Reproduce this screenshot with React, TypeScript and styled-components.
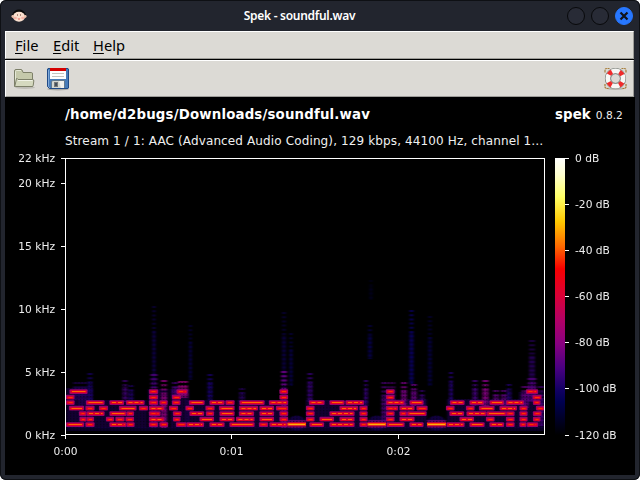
import React from "react";
import styled, { createGlobalStyle } from "styled-components";

const Global = createGlobalStyle`
  * { box-sizing: border-box; }
  body { margin: 0; background: #fff; overflow: hidden; }
`;

const Frame = styled.div`
  width: 640px;
  height: 480px;
  display: flex;
  flex-direction: column;
  padding: 1px 5px 5px 5px;
  background: #22252e;
  border-radius: 6px;
  box-shadow: inset 0 0 0 1px #0e1014;
  font-family: "DejaVu Sans", sans-serif;
`;

const TitleBar = styled.header`
  height: 30px;
  flex: none;
  display: grid;
  grid-template-columns: 80px 1fr 80px;
  align-items: center;
  color: #fff;
`;

const AppIcon = styled.svg`
  display: block;
  margin-left: 5px;
`;

const Title = styled.h1`
  margin: 0;
  text-align: center;
  padding-right: 41px;
  font: 600 12px/16px "Noto Sans", sans-serif;
  letter-spacing: -0.28px;
  white-space: nowrap;
`;

const Controls = styled.div`
  display: flex;
  justify-content: flex-end;
  gap: 6px;
  padding-right: 2px;
`;

const Control = styled.button<{ $close?: boolean }>`
  width: 18px;
  height: 18px;
  padding: 0;
  border-radius: 50%;
  border: 1px solid ${(p) => (p.$close ? "#2777ff" : "#08090b")};
  background: ${(p) => (p.$close ? "#2777ff" : "#282b36")};
  display: grid;
  place-items: center;
`;

const Bar = styled.nav<{ $height: number }>`
  height: ${(p) => p.$height}px;
  flex: none;
  display: flex;
  align-items: center;
  background: #dcdad5;
  border-top: 1px solid #fff;
  border-left: 1px solid #fff;
  border-right: 1px solid #9d9c98;
  border-bottom: 1px solid #9d9c98;
  margin-right: 1px;
`;

const MenuBar = styled(Bar)`
  padding: 0 0 1px 9px;
  gap: 14px;
  margin-bottom: 1px;
  box-shadow: 0 1px 0 #000;
  font: 14.667px/20px "Noto Sans", sans-serif;
  color: #000;
`;

const MenuItem = styled.span<{ $width: number }>`
  width: ${(p) => p.$width}px;
  white-space: nowrap;
`;

const Key = styled.span`
  text-decoration: underline;
  text-decoration-thickness: 1px;
  text-underline-offset: 2px;
`;

const ToolBar = styled(Bar)`
  padding: 0 6px 0 6px;
  gap: 10px;
`;

const Spacer = styled.div`
  flex: 1;
`;

const Content = styled.main`
  flex: 1;
  min-height: 0;
  background: #000;
  color: #fff;
  display: flex;
  flex-direction: column;
`;

const Heading = styled.div`
  display: flex;
  align-items: baseline;
  height: 34px;
  padding: 10px 10px 0 60px;
  white-space: nowrap;
`;

const FileName = styled.strong`
  width: 490px;
  font-size: 13.333px;
  line-height: 16px;
  letter-spacing: 0.17px;
`;

const Brand = styled.strong`
  font-size: 13.333px;
  line-height: 16px;
  letter-spacing: 0.1px;
`;

const Version = styled.span`
  margin-left: 5px;
  font-size: 10.667px;
  color: #eee;
`;

const StreamInfo = styled.div`
  height: 17px;
  padding-left: 60px;
  font-size: 12px;
  line-height: 20px;
  letter-spacing: 0.125px;
  color: #f0f0f0;
  white-space: nowrap;
`;

const Chart = styled.svg`
  display: block;
  flex: none;
  font-size: 10.667px;
`;

type Segment = [number, number];

const ROW_Y = [391, 396.6, 402, 407.6, 413, 418.6, 424];

const NOTES: Segment[][] = [
  [[70, 87], [149.5, 157.5], [177, 187], [280, 287.5], [386.5, 394], [526.5, 537.5]],
  [[66.5, 74], [149.5, 157.5], [172.5, 180.5], [280, 287.5], [386.5, 394], [533, 541]],
  [[66.5, 74], [86.5, 104], [110, 123.5], [126.5, 144], [149.5, 157.5], [160, 167], [172.5, 180], [189.5, 204], [210, 224], [226, 234], [240, 264], [269.5, 287.5], [309.5, 324], [330, 344], [346, 363.5], [386.5, 404], [410, 423], [450.5, 464], [470, 483.5], [490, 503.5], [506.5, 523.5], [533.5, 540]],
  [[69.5, 83.5], [86, 94], [99.5, 107.5], [119.5, 136], [139.5, 147.5], [149.5, 164], [169.5, 177.5], [186, 193.5], [206, 214], [219.5, 234], [239.5, 257.5], [260, 273.5], [276.5, 287.5], [306.5, 314], [340, 357.5], [360, 367], [386.5, 397.5], [400, 414], [417, 427], [446.5, 454], [466.5, 474], [479.5, 494], [500, 516.5], [520, 527], [536.5, 544]],
  [[79.5, 86], [87, 104], [110, 126], [127, 133.5], [149.5, 160], [173.5, 181], [190, 203.5], [206.5, 213.5], [220, 234], [239.5, 253.5], [260, 273.5], [280, 287.5], [306.5, 314], [330, 354], [360, 367], [386.5, 394], [400, 406.5], [407.5, 426], [450, 463.5], [467, 486], [487, 506], [506.5, 514], [520, 527], [533.5, 541]],
  [[80, 86], [87, 93.5], [106.5, 113.5], [116, 124], [126, 133.5], [149.5, 164], [173.5, 180], [200, 213.5], [220, 234], [236.5, 254], [260, 273.5], [280, 287.5], [306.5, 314], [320, 333.5], [340, 354], [360, 367], [386.5, 394], [400, 414], [460, 473.5], [486.5, 494], [506.5, 514], [520, 527], [533.5, 540]],
  [[66.5, 83.5], [86, 94], [110, 126], [127, 134], [149.5, 157.5], [160, 167.5], [176.5, 186], [187, 203.5], [210, 224], [230, 254], [259.5, 267.5], [270, 287], [310, 323.5], [330, 354], [360, 367], [387, 404], [410, 423], [447, 464], [470, 484], [490, 503.5], [506.5, 514], [520, 526], [527.5, 537.5]],
];

const SUSTAINED: Segment[] = [[287.5, 306], [367.5, 386], [427, 446]];

/* x, top, bottom, width, colour, peak opacity */
const SPIKES: [number, number, number, number, string, number][] = [
  [154, 306, 388, 3, "#14006c", 0.5],
  [154, 374, 428, 7, "#50007e", 0.8],
  [164, 380, 428, 6, "#8a0078", 0.8],
  [190.5, 325, 380, 3, "#0c0064", 0.45],
  [284, 312, 390, 4, "#100064", 0.4],
  [284, 371, 428, 6, "#6c0084", 0.85],
  [291, 333, 386, 3, "#0a0060", 0.55],
  [370, 325, 359, 4, "#09006c", 0.45],
  [371, 280, 300, 3, "#060050", 0.25],
  [411.5, 310, 384, 4, "#0a0060", 0.8],
  [430, 316, 386, 4, "#08005c", 0.4],
  [532, 340, 392, 6, "#300070", 0.5],
  [183, 381, 398, 10, "#9a007c", 0.75],
  [175, 382, 398, 6, "#4b0080", 0.7],
  [90, 373, 402, 5, "#1c0078", 0.6],
  [80, 382, 400, 14, "#2a0070", 0.5],
  [125, 380, 402, 5, "#450080", 0.65],
  [131, 385, 402, 5, "#250078", 0.6],
  [210, 374, 400, 5, "#1a0074", 0.7],
  [242, 388, 402, 6, "#300078", 0.5],
  [310, 373, 402, 5, "#3a0080", 0.7],
  [366, 380, 406, 4, "#380080", 0.7],
  [384, 382, 428, 5, "#500080", 0.7],
  [391, 382, 404, 9, "#5b0080", 0.5],
  [404, 382, 408, 6, "#750080", 0.8],
  [414, 384, 406, 6, "#640080", 0.8],
  [422, 390, 406, 5, "#400080", 0.6],
  [451, 372, 404, 4, "#26007a", 0.7],
  [475, 380, 406, 5, "#460080", 0.75],
  [485.5, 380, 408, 6, "#820080", 0.85],
  [496, 390, 406, 6, "#600080", 0.7],
  [504, 390, 406, 6, "#600080", 0.7],
  [509, 384, 405, 5, "#260078", 0.7],
  [525, 386, 408, 7, "#640080", 0.7],
  [532, 378, 402, 9, "#580080", 0.7],
  [541, 386, 426, 6, "#480080", 0.6],
];

/* cluster extents behind the notes */
const CLOUDS: [number, number, number][] = [
  [66, 93, 388], [79, 107, 400], [107, 147, 400], [148, 168, 389], [170, 189, 389],
  [186, 235, 400], [237, 288, 400], [306, 367, 400], [385, 427, 399], [447, 527, 399], [519, 544, 392],
];

const FREQ_TICKS: [number, string][] = [[158.5, "22 kHz"], [183.5, "20 kHz"], [246.5, "15 kHz"], [309.5, "10 kHz"], [372.5, "5 kHz"], [435.5, "0 kHz"]];
const TIME_TICKS: [number, string][] = [[65.5, "0:00"], [231.5, "0:01"], [398.5, "0:02"]];
const LEVEL_TICKS: [number, string][] = [[158.5, "0 dB"], [204.5, "-20 dB"], [250.5, "-40 dB"], [296.5, "-60 dB"], [342.5, "-80 dB"], [388.5, "-100 dB"], [435.5, "-120 dB"]];

const PALETTE: [number, string][] = [[0, "#fff"], [6, "#ffffd0"], [14, "#ffff66"], [23, "#ffc800"], [32, "#ff6800"], [40, "#f80000"], [50, "#d80038"], [59, "#b00068"], [67, "#880080"], [76, "#480080"], [84, "#100062"], [88, "#000050"], [100, "#000"]];

const Spectrum = () => (
  <g>
    <g filter="url(#soften)">
      {CLOUDS.map(([a, b, y], i) => (
        <rect key={i} x={a} y={y} width={b - a} height={428 - y} fill="#20005a" opacity={0.55} />
      ))}
      <rect x={66} y={427} width={478} height={4} fill="#12004a" opacity={0.55} />
      {SUSTAINED.map(([a, b], i) => (
        <g key={i}>
          <ellipse cx={(a + b) / 2} cy={423} rx={(b - a) / 2} ry={7.5} fill="#180058" opacity={0.7} />
          <rect x={a} y={420} width={b - a} height={8} fill="#780070" opacity={0.75} />
        </g>
      ))}
    </g>
    <g filter="url(#soften)">
      {SPIKES.map(([x, top, bottom, w, c, o], i) => (
        <g key={i}>
          <rect x={x - w / 2} y={top + (bottom - top) * 0.3} width={w} height={(bottom - top) * 0.7} fill={c} opacity={o * 0.75} />
          <path d={`M${x} ${top}V${bottom}`} stroke={c} strokeWidth={w} strokeDasharray="2 2.2" opacity={o} />
        </g>
      ))}
    </g>
    <rect x={66} y={382} width={478} height={52} fill="url(#grain)" />
    <g filter="url(#glow)">
      {NOTES.map((row, r) => row.map(([a, b], i) => (
        <rect key={`${r}-${i}`} x={a - 0.6} y={ROW_Y[r] - 1.8} width={b - a + 1.2} height={4.8} rx={1} fill="#98006c" />
      )))}
    </g>
    {NOTES.map((row, r) => row.map(([a, b], i) => {
      const y = Math.round(ROW_Y[r]);
      return (
        <g key={`${r}-${i}`}>
          <rect x={a + 0.3} y={y - 0.8} width={b - a - 0.6} height={2.7} rx={0.8} fill="#e00024" />
          <path
            d={`M${a + 2} ${y + 0.5}H${b - 1.5}`}
            stroke={b - a > 11 ? "#ff6300" : "#fb3000"}
            strokeWidth={1}
            strokeDasharray={(i + r) % 3 === 0 ? undefined : "4 2"}
          />
        </g>
      );
    }))}
    {SUSTAINED.map(([a, b], i) => (
      <g key={i}>
        <rect x={a} y={422.2} width={b - a} height={4.2} fill="#c80040" />
        <rect x={a} y={423} width={b - a} height={2.5} fill="#ff4e00" />
        <rect x={a + 1} y={424} width={b - a - 2} height={1} fill="#ffb010" />
      </g>
    ))}
  </g>
);

const SpectrumChart = () => (
  <Chart width="630" height="327" viewBox="5 148 630 327">
    <defs>
      <linearGradient id="palette" x1="0" y1="0" x2="0" y2="1">
        {PALETTE.map(([o, c]) => <stop key={o} offset={`${o}%`} stopColor={c} />)}
      </linearGradient>
      <filter id="soften" x="-5%" y="-5%" width="110%" height="110%" colorInterpolationFilters="sRGB"><feGaussianBlur stdDeviation="1 0.7" /></filter>
      <filter id="glow" x="-5%" y="-20%" width="110%" height="140%" colorInterpolationFilters="sRGB"><feGaussianBlur stdDeviation="0.7 0.4" /></filter>
      <clipPath id="plot"><rect x="66" y="159" width="478" height="275" /></clipPath>
      <pattern id="grain" width="3.33" height="2.77" patternUnits="userSpaceOnUse">
        <rect width="1.2" height="1.2" fill="#000" opacity="0.5" />
      </pattern>
    </defs>
    <g clipPath="url(#plot)"><Spectrum /></g>
    <rect x="65.5" y="158.5" width="479" height="276" fill="none" stroke="#fff" />
    <rect x="555" y="158" width="10" height="277" fill="url(#palette)" />
    {FREQ_TICKS.map(([y, t]) => (
      <g key={t}>
        <path d={`M61 ${y}H65`} stroke="#fff" />
        <text x="55" y={y + 3.5} fill="#eee" textAnchor="end">{t}</text>
      </g>
    ))}
    {TIME_TICKS.map(([x, t]) => (
      <g key={t}>
        <path d={`M${x} 435V439`} stroke="#fff" />
        <text x={x} y="455" fill="#eee" textAnchor="middle">{t}</text>
      </g>
    ))}
    {LEVEL_TICKS.map(([y, t]) => (
      <g key={t}>
        <path d={`M565 ${y}H569`} stroke="#fff" />
        <text x="575" y={y + 3.5} fill="#eee">{t}</text>
      </g>
    ))}
  </Chart>
);

const FaceIcon = () => (
  <AppIcon width="18" height="16" viewBox="0 0 18 16">
    <path d="M2 7Q4 1.500 9 1.500T16 7L16.500 10H1.500Z" fill="#080808" />
    <ellipse cx="9" cy="8.800" rx="6" ry="5" fill="#fae0cf" />
    <circle cx="2.800" cy="8.500" r="1.400" fill="#eac0ad" />
    <circle cx="15.200" cy="8.500" r="1.400" fill="#eac0ad" />
    <ellipse cx="5.300" cy="10" rx="1.600" ry="1.200" fill="#f6b3a6" />
    <ellipse cx="12.700" cy="10" rx="1.600" ry="1.200" fill="#f6b3a6" />
    <path d="M7.500 6V8M10.500 6V8" stroke="#b08a7c" />
    <path d="M7.500 10.500H10.500L9 12Z" fill="#e86058" />
  </AppIcon>
);

const FolderIcon = () => (
  <svg width="24" height="24" viewBox="-1 0 24 24">
    <ellipse cx="12" cy="20.500" rx="10" ry="1.500" fill="#aaa9a2" opacity=".6" />
    <path d="M1.500 19.500V4Q1.500 2.500 3 2.500H8Q9 2.500 9.500 4L10 5.500H18.500Q19.500 5.500 19.500 7V19.500Z" fill="#c5c9ab" stroke="#7d8069" />
    <path d="M2.500 18V4.500Q2.500 3.500 3.500 3.500H8" fill="none" stroke="#e5e8d6" />
    <path d="M3.500 11.500Q3.800 10.500 5 12.500H19.500Q21 12.500 20.800 14L20.200 18.500Q20.100 19.500 19 19.500H2.500Q1.500 19.500 2 18.500Z" fill="#d5d9bf" stroke="#7d8069" />
    <path d="M5 13.500H19.500" stroke="#f1f3e7" />
  </svg>
);

const SaveIcon = () => (
  <svg width="24" height="24" viewBox="0 0 24 24">
    <ellipse cx="12" cy="22" rx="11" ry="1.500" fill="#aaa9a3" />
    <path d="M2 1.500H22L22.500 2V21L22 21.500H3.500L1.500 19.500V2Z" fill="#477bb8" stroke="#204a87" />
    <path d="M2.500 3V19.500L4 21" fill="none" stroke="#82a9d8" />
    <rect x="4" y="1" width="16" height="11" fill="#fff" />
    <rect x="4" y="1" width="16" height="3" fill="#d40000" />
    <path d="M6 6.500H18M6 9.500H18" stroke="#c4c4bf" />
    <path d="M5.500 21V15Q5.500 13.500 7 13.500H18.500V21" fill="#d5d7d1" stroke="#62798f" />
    <rect x="8.500" y="15.500" width="3" height="4" fill="#44505c" stroke="#777" />
    <path d="M13 14H18V21H15Z" fill="#f1f1ee" />
  </svg>
);

const HelpIcon = () => (
  <svg width="24" height="24" viewBox="-1.500 0 24 24">
    <ellipse cx="11" cy="21.500" rx="9" ry="1.400" fill="#b4b3ad" />
    <path d="M5 1.500H2Q.5 1.500 .5 4V6M17 1.500H20Q21.500 1.500 21.500 4V6M.5 17V20Q.5 21.500 4 21.500M21.500 17V20Q21.500 21.500 18 21.500" fill="none" stroke="#a67c39" strokeWidth="1.200" strokeDasharray="2 .6" />
    <circle cx="11" cy="11.500" r="7.600" fill="none" stroke="#777c76" strokeWidth="6" />
    <circle cx="11" cy="11.500" r="7.600" fill="none" stroke="#f7f7f5" strokeWidth="4.800" />
    <circle cx="11" cy="11.500" r="7.600" fill="none" stroke="#ef2b2b" strokeWidth="4.800" strokeDasharray="4.200 7.738" strokeDashoffset="-3.869" />
    <circle cx="11" cy="11.500" r="4.800" fill="none" stroke="#858782" strokeWidth=".7" />
  </svg>
);

const MENU: [string, string, number][] = [["F", "ile", 24], ["E", "dit", 26], ["H", "elp", 32]];

export default function App() {
  return (
    <>
      <Global />
      <Frame>
        <TitleBar>
          <FaceIcon />
          <Title>Spek - soundful.wav</Title>
          <Controls>
            <Control aria-label="Minimize" />
            <Control aria-label="Maximize" />
            <Control $close aria-label="Close">
              <svg width="10" height="10" viewBox="0 0 10 10"><path d="M1.500 1.500L8.500 8.500M8.500 1.500L1.500 8.500" stroke="#10131a" strokeWidth="2.200" /></svg>
            </Control>
          </Controls>
        </TitleBar>
        <MenuBar $height={28}>
          {MENU.map(([key, rest, width]) => <MenuItem key={key} $width={width}><Key>{key}</Key>{rest}</MenuItem>)}
        </MenuBar>
        <ToolBar $height={37}>
          <FolderIcon />
          <SaveIcon />
          <Spacer />
          <HelpIcon />
        </ToolBar>
        <Content>
          <Heading>
            <FileName>/home/d2bugs/Downloads/soundful.wav</FileName>
            <Brand>spek</Brand>
            <Version>0.8.2</Version>
          </Heading>
          <StreamInfo>Stream 1 / 1: AAC (Advanced Audio Coding), 129 kbps, 44100 Hz, channel 1…</StreamInfo>
          <SpectrumChart />
        </Content>
      </Frame>
    </>
  );
}
